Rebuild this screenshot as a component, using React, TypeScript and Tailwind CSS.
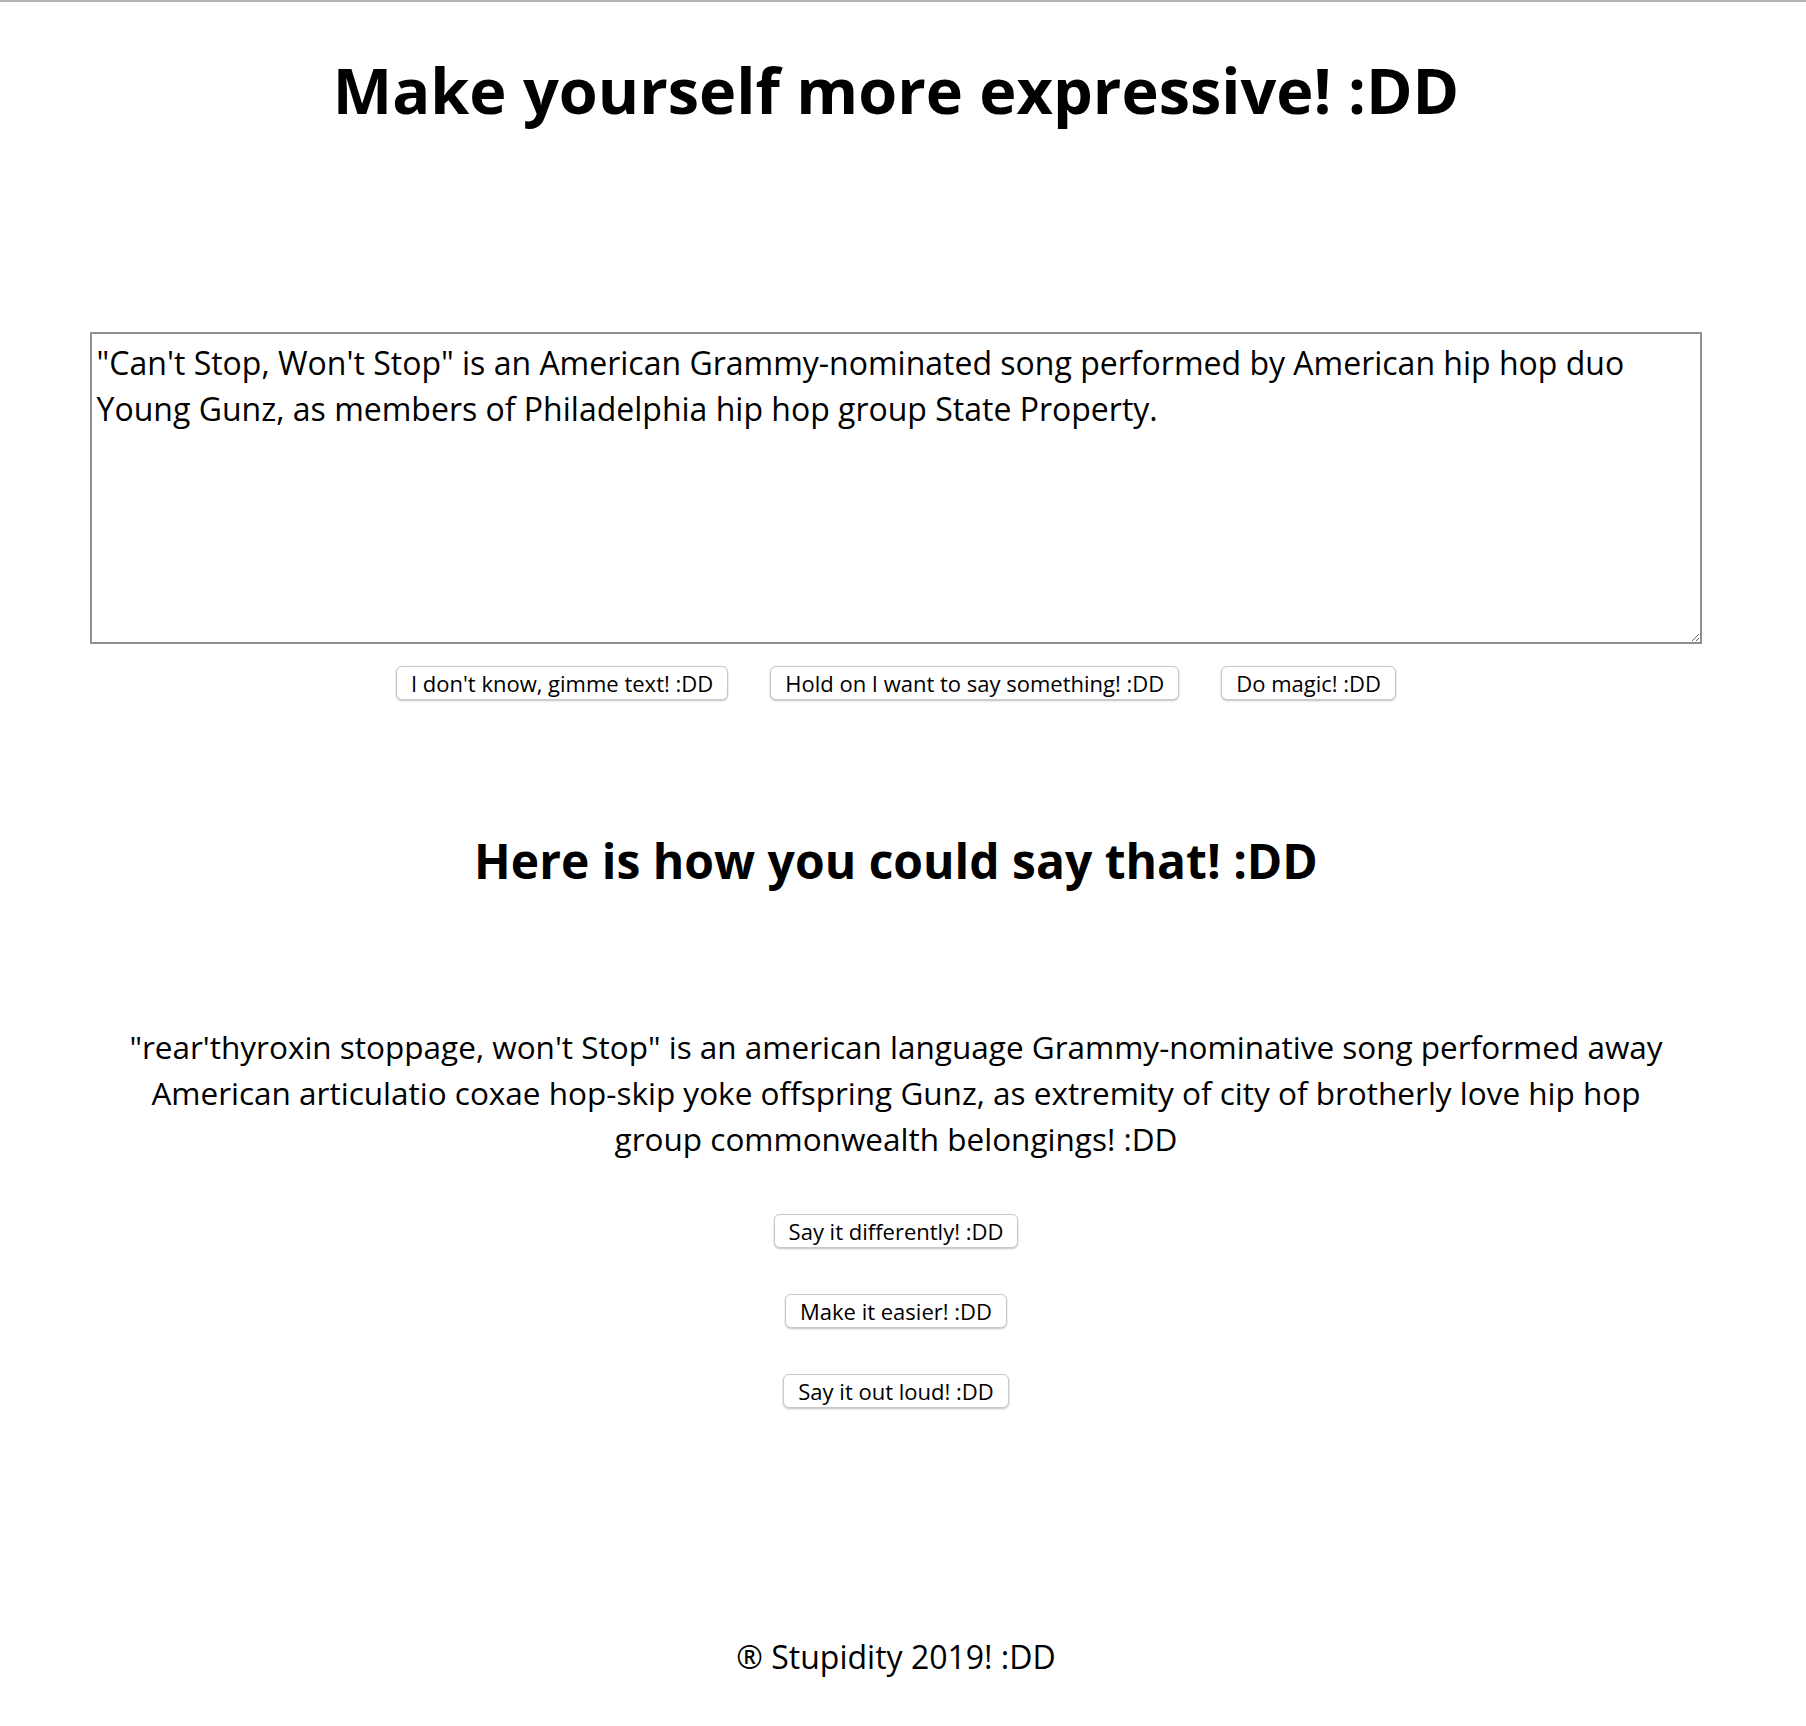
const btn =
  "bg-white border border-[#c8c8c8] rounded-[6px] shadow-[0_1px_2px_rgba(0,0,0,0.25)] text-[22px] leading-[32px] px-[14px] text-black";

export default function App() {
  return (
    <div
      className="min-h-[1726px] bg-white border-t-2 border-[#b3b3b3] text-black pr-[14px]"
      style={{ fontFamily: '"Comic Sans MS", "Open Sans", sans-serif' }}
    >
      <h1 className="text-center text-[63px] font-bold leading-[88px] pt-[44px]">
        Make yourself more expressive! :DD
      </h1>

      <div className="mt-[198px] flex justify-center">
        <textarea
          className="w-[90%] h-[312px] border-2 border-[#8f8f8f] px-[5px] py-[6px] text-[32px] leading-[46px] resize-y outline-none"
          style={{ fontFamily: '"Comic Sans MS", "Open Sans", sans-serif' }}
          defaultValue={
            '"Can\'t Stop, Won\'t Stop" is an American Grammy-nominated song performed by American hip hop duo Young Gunz, as members of Philadelphia hip hop group State Property.'
          }
        />
      </div>

      <div className="mt-[22px] flex justify-center gap-[42px]">
        <button className={btn}>I don't know, gimme text! :DD</button>
        <button className={btn}>Hold on I want to say something! :DD</button>
        <button className={btn}>Do magic! :DD</button>
      </div>

      <h2 className="text-center text-[48px] font-bold leading-[66px] mt-[128px]">
        Here is how you could say that! :DD
      </h2>

      <p className="text-center text-[31.5px] leading-[46px] mt-[130px] px-[60px]">
        "rear'thyroxin stoppage, won't Stop" is an american language Grammy-nominative song performed away
        <br />
        American articulatio coxae hop-skip yoke offspring Gunz, as extremity of city of brotherly love hip hop
        <br />
        group commonwealth belongings! :DD
      </p>

      <div className="mt-[52px] flex flex-col items-center gap-[46px]">
        <button className={btn}>Say it differently! :DD</button>
        <button className={btn}>Make it easier! :DD</button>
        <button className={btn}>Say it out loud! :DD</button>
      </div>

      <footer className="text-center text-[32px] leading-[46px] mt-[226px]">
        ® Stupidity 2019! :DD
      </footer>
    </div>
  );
}
